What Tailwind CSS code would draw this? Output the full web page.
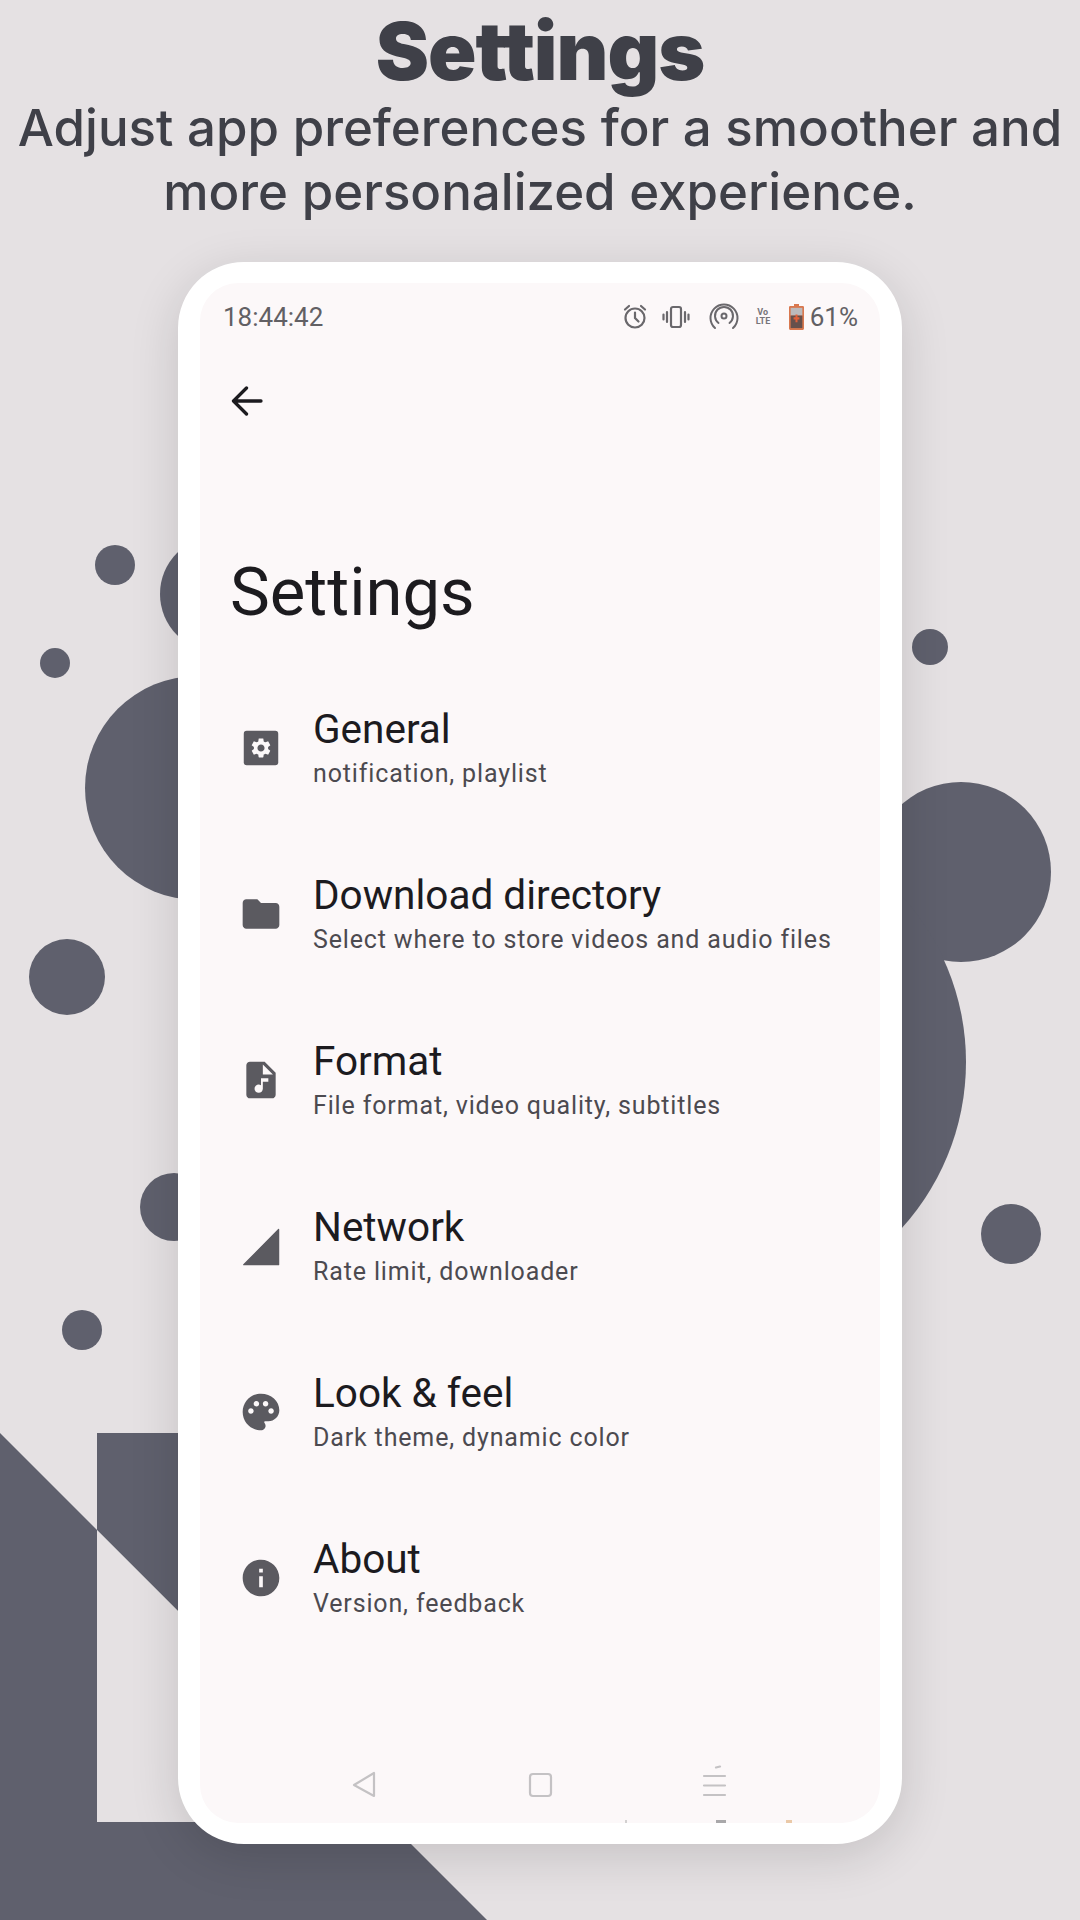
<!DOCTYPE html>
<html>
<head>
<meta charset="utf-8">
<script src="https://cdn.jsdelivr.net/npm/@tailwindcss/browser@4"></script>
</head>
<body class="m-0">
<div class="relative w-[1080px] h-[1920px] overflow-hidden bg-[#e5e1e3] font-['Roboto',sans-serif]">
  <svg class="absolute inset-0" width="1080" height="1920" viewBox="0 0 1080 1920" fill="#5f606d">
    <circle cx="115" cy="565" r="20"/>
    <circle cx="55" cy="663" r="15"/>
    <circle cx="197" cy="788" r="112"/>
    <circle cx="67" cy="977" r="38"/>
    <circle cx="218" cy="594" r="58"/>
    <circle cx="174" cy="1207" r="34"/>
    <circle cx="82" cy="1330" r="20"/>
    <circle cx="930" cy="647" r="18"/>
    <circle cx="961" cy="872" r="90"/>
    <circle cx="719" cy="1062" r="247"/>
    <circle cx="1011" cy="1234" r="30"/>
    <polygon points="0,1433 487,1920 0,1920"/>
    <polygon points="97,1433 300,1433 300,1733 97,1530"/>
    <polygon points="97,1530 389,1822 97,1822" fill="#e5e1e3"/>
  </svg>

  <header class="relative h-[262px] text-center font-['Inter',sans-serif] text-[#3f4048]">
    <h1 class="m-0 pt-[10px] text-[80px] leading-[82px] font-black tracking-[-1px]">Settings</h1>
    <p class="m-0 mt-[4px] text-[51px] leading-[64px] font-medium">Adjust app preferences for a smoother and<br>more personalized experience.</p>
  </header>

  <div class="relative mx-auto w-[724px] h-[1582px] box-border border-x-[22px] border-y-[21px] border-white bg-white rounded-[66px] shadow-[0_12px_50px_rgba(0,0,0,0.14)]">
    <div class="relative flex flex-col h-full rounded-[38px] overflow-hidden bg-[#fcf8f9]">

      <div class="flex items-center justify-between shrink-0 h-[68px] pl-[23px] pr-[22px] text-[#626064] text-[26px]">
        <span>18:44:42</span>
        <div class="flex items-center">
          <svg class="w-[28px] h-[28px]" viewBox="0 0 28 28" fill="none" stroke="#6a686c" stroke-width="2.2" stroke-linecap="round">
            <circle cx="14" cy="15" r="9.5"/><path d="M14 9.5V15l3.5 3.5M4 6.5 8 3M24 6.5 20 3"/>
          </svg>
          <svg class="ml-[13px] w-[28px] h-[24px]" viewBox="0 0 28 24" fill="none" stroke="#6a686c" stroke-width="2.2" stroke-linecap="round">
            <rect x="9" y="2" width="10" height="20" rx="2"/><path d="M5 7v10M1.500 9.500v5M23 7v10M26.500 9.500v5"/>
          </svg>
          <svg class="ml-[19px] w-[30px] h-[30px]" viewBox="0 0 30 30" fill="none" stroke="#6a686c" stroke-width="2" stroke-linecap="round">
            <circle cx="15" cy="14" r="2.500"/><path d="M9.500 21a9 9 0 1 1 11 0M6 26a13.500 13.500 0 1 1 18 0"/>
          </svg>
          <span class="ml-[17px] w-[14px] text-center text-[9px] leading-[9px] font-bold text-[#77757a]">Vo<br>LTE</span>
          <svg class="ml-[19px] w-[15px] h-[26px]" viewBox="0 0 18 27" preserveAspectRatio="none">
            <path d="M6 0h6v2h4.500a1.500 1.500 0 0 1 1.500 1.500V25.500a1.500 1.500 0 0 1-1.500 1.500H1.500A1.500 1.500 0 0 1 0 25.500V3.500A1.500 1.500 0 0 1 1.500 2H6z" fill="#d9784f"/>
            <rect x="2" y="4" width="14" height="8" fill="#bcbabc"/>
            <rect x="2" y="12" width="14" height="13" fill="#66504c"/>
            <path d="M9 11v8M5.500 15h7" stroke="#e2603a" stroke-width="2.400"/>
          </svg>
          <span class="ml-[6px]">61%</span>
        </div>
      </div>

      <div class="flex items-center shrink-0 h-[100px] pl-[31px]">
        <svg class="w-[32px] h-[30px]" viewBox="0 0 32 30" fill="none" stroke="#1c1b1f" stroke-width="3.300" stroke-linecap="round" stroke-linejoin="round">
          <path d="M30 15H3M15.500 2 2.500 15l13 13"/>
        </svg>
      </div>

      <h2 class="shrink-0 m-0 h-[214px] pt-[99px] pl-[30px] text-[67px] leading-[84px] font-normal text-[#1c1b1f]">Settings</h2>

      <div class="flex flex-col">
        <div class="flex items-center h-[166px]">
          <svg class="ml-[39px] mr-[30px] w-[44px] h-[44px] shrink-0" viewBox="0 0 24 24" fill="#5b5a60">
            <rect x="2.600" y="2.600" width="18.800" height="18.800" rx="1.600"/>
            <path transform="translate(12 12) scale(.54) translate(-12 -12)" fill="#fcf8f9" fill-rule="evenodd" d="M19.140 12.940c.04-.3.060-.61.060-.94 0-.32-.020-.64-.070-.94l2.030-1.580c.18-.14.230-.41.120-.61l-1.920-3.320c-.12-.22-.37-.29-.59-.22l-2.390.96c-.5-.38-1.030-.7-1.620-.94l-.36-2.540c-.04-.24-.24-.41-.48-.41h-3.840c-.24 0-.43.170-.47.410l-.36 2.540c-.59.240-1.130.570-1.620.94l-2.390-.96c-.22-.08-.47 0-.59.220L2.740 8.870c-.12.21-.08.470.12.610l2.030 1.580c-.05.3-.09.630-.09.940s.02.640.07.940l-2.030 1.580c-.18.140-.23.410-.12.610l1.920 3.320c.12.220.37.290.59.220l2.390-.96c.5.380 1.030.7 1.620.94l.36 2.540c.05.240.24.410.48.410h3.840c.24 0 .44-.170.470-.410l.36-2.540c.59-.240 1.130-.560 1.620-.94l2.390.96c.22.080.47 0 .59-.220l1.920-3.320c.12-.220.070-.470-.12-.610l-2.010-1.580zM12 15.600c-1.980 0-3.600-1.620-3.600-3.600s1.620-3.600 3.600-3.600 3.600 1.620 3.600 3.600-1.620 3.600-3.600 3.600z"/>
          </svg>
          <div class="min-w-0 whitespace-nowrap">
            <div class="text-[40.500px] leading-[46px] text-[#1c1b1f]">General</div>
            <div class="mt-[5px] text-[25px] leading-[34px] tracking-[0.85px] text-[#4c4a50]">notification, playlist</div>
          </div>
        </div>
        <div class="flex items-center h-[166px]">
          <svg class="ml-[39px] mr-[30px] w-[44px] h-[44px] shrink-0" viewBox="0 0 24 24" fill="#5b5a60">
            <path d="M10 4H4c-1.100 0-1.990.9-1.990 2L2 18c0 1.100.9 2 2 2h16c1.100 0 2-.9 2-2V8c0-1.100-.9-2-2-2h-8l-2-2z"/>
          </svg>
          <div class="min-w-0 whitespace-nowrap">
            <div class="text-[40.500px] leading-[46px] text-[#1c1b1f]">Download directory</div>
            <div class="mt-[5px] text-[25px] leading-[34px] tracking-[0.85px] text-[#4c4a50]">Select where to store videos and audio files</div>
          </div>
        </div>
        <div class="flex items-center h-[166px]">
          <svg class="ml-[39px] mr-[30px] w-[44px] h-[44px] shrink-0" viewBox="0 0 24 24" fill="#5b5a60">
            <path d="M14 2H6c-1.100 0-2 .9-2 2v16c0 1.100.9 2 2 2h12c1.100 0 2-.9 2-2V8l-6-6zm2 11h-3v3.750c0 1.240-1.010 2.250-2.250 2.250S8.500 17.990 8.500 16.750s1.010-2.250 2.250-2.250c.46 0 .89.140 1.250.380V11h4v2zm-3-4V3.500L18.500 9H13z"/>
          </svg>
          <div class="min-w-0 whitespace-nowrap">
            <div class="text-[40.500px] leading-[46px] text-[#1c1b1f]">Format</div>
            <div class="mt-[5px] text-[25px] leading-[34px] tracking-[0.85px] text-[#4c4a50]">File format, video quality, subtitles</div>
          </div>
        </div>
        <div class="flex items-center h-[166px]">
          <svg class="ml-[39px] mr-[30px] w-[44px] h-[44px] shrink-0" viewBox="0 0 24 24" fill="#5b5a60" stroke="#5b5a60" stroke-width=".7" stroke-linejoin="round">
            <path d="M2.600 22.200h19V3z"/>
          </svg>
          <div class="min-w-0 whitespace-nowrap">
            <div class="text-[40.500px] leading-[46px] text-[#1c1b1f]">Network</div>
            <div class="mt-[5px] text-[25px] leading-[34px] tracking-[0.85px] text-[#4c4a50]">Rate limit, downloader</div>
          </div>
        </div>
        <div class="flex items-center h-[166px]">
          <svg class="ml-[39px] mr-[30px] w-[44px] h-[44px] shrink-0" viewBox="0 0 24 24" fill="#5b5a60">
            <path fill-rule="evenodd" d="M12 2C6.490 2 2 6.490 2 12s4.490 10 10 10c1.380 0 2.500-1.120 2.500-2.500 0-.61-.23-1.200-.64-1.670-.08-.1-.13-.21-.13-.33 0-.28.22-.5.5-.5H16c3.310 0 6-2.690 6-6 0-4.960-4.490-9-10-9zm5.500 11c-.83 0-1.500-.67-1.500-1.500s.67-1.500 1.500-1.500 1.500.67 1.500 1.500-.67 1.500-1.500 1.500zm-3-4c-.83 0-1.500-.67-1.500-1.500S13.670 6 14.500 6s1.500.67 1.500 1.500S15.330 9 14.500 9zM5 11.500c0-.83.67-1.500 1.500-1.500s1.500.67 1.500 1.500S7.330 13 6.500 13 5 12.330 5 11.500zm6-4c0 .83-.67 1.500-1.500 1.500S8 8.330 8 7.500 8.670 6 9.500 6s1.500.67 1.500 1.500z"/>
          </svg>
          <div class="min-w-0 whitespace-nowrap">
            <div class="text-[40.500px] leading-[46px] text-[#1c1b1f]">Look &amp; feel</div>
            <div class="mt-[5px] text-[25px] leading-[34px] tracking-[0.85px] text-[#4c4a50]">Dark theme, dynamic color</div>
          </div>
        </div>
        <div class="flex items-center h-[166px]">
          <svg class="ml-[39px] mr-[30px] w-[44px] h-[44px] shrink-0" viewBox="0 0 24 24" fill="#5b5a60">
            <path d="M12 2C6.480 2 2 6.480 2 12s4.480 10 10 10 10-4.480 10-10S17.520 2 12 2zm1 15h-2v-6h2v6zm0-8h-2V7h2v2z"/>
          </svg>
          <div class="min-w-0 whitespace-nowrap">
            <div class="text-[40.500px] leading-[46px] text-[#1c1b1f]">About</div>
            <div class="mt-[5px] text-[25px] leading-[34px] tracking-[0.85px] text-[#4c4a50]">Version, feedback</div>
          </div>
        </div>
      </div>

      <svg class="absolute left-0 bottom-0" width="680" height="70" viewBox="200 1753 680 70" fill="none" stroke="#c4c2c4" stroke-width="2.200" stroke-linejoin="round" stroke-linecap="round">
        <path d="M374 1773v23l-20-11z"/>
        <rect x="530" y="1774" width="21" height="22" rx="3"/>
        <path d="M704 1776h21M704 1785.500h21M704 1795h21M716 1767.500l4-1"/>
      </svg>
      <svg class="absolute left-0 bottom-0" width="680" height="4" viewBox="200 1819 680 4">
        <rect x="625" y="1820" width="2" height="3" fill="#d2d0d0"/>
        <rect x="716" y="1820" width="10" height="3" fill="#a9a8aa"/>
        <rect x="786" y="1820" width="6" height="3" fill="#eac9a8"/>
      </svg>
    </div>
  </div>
</div>
</body>
</html>
